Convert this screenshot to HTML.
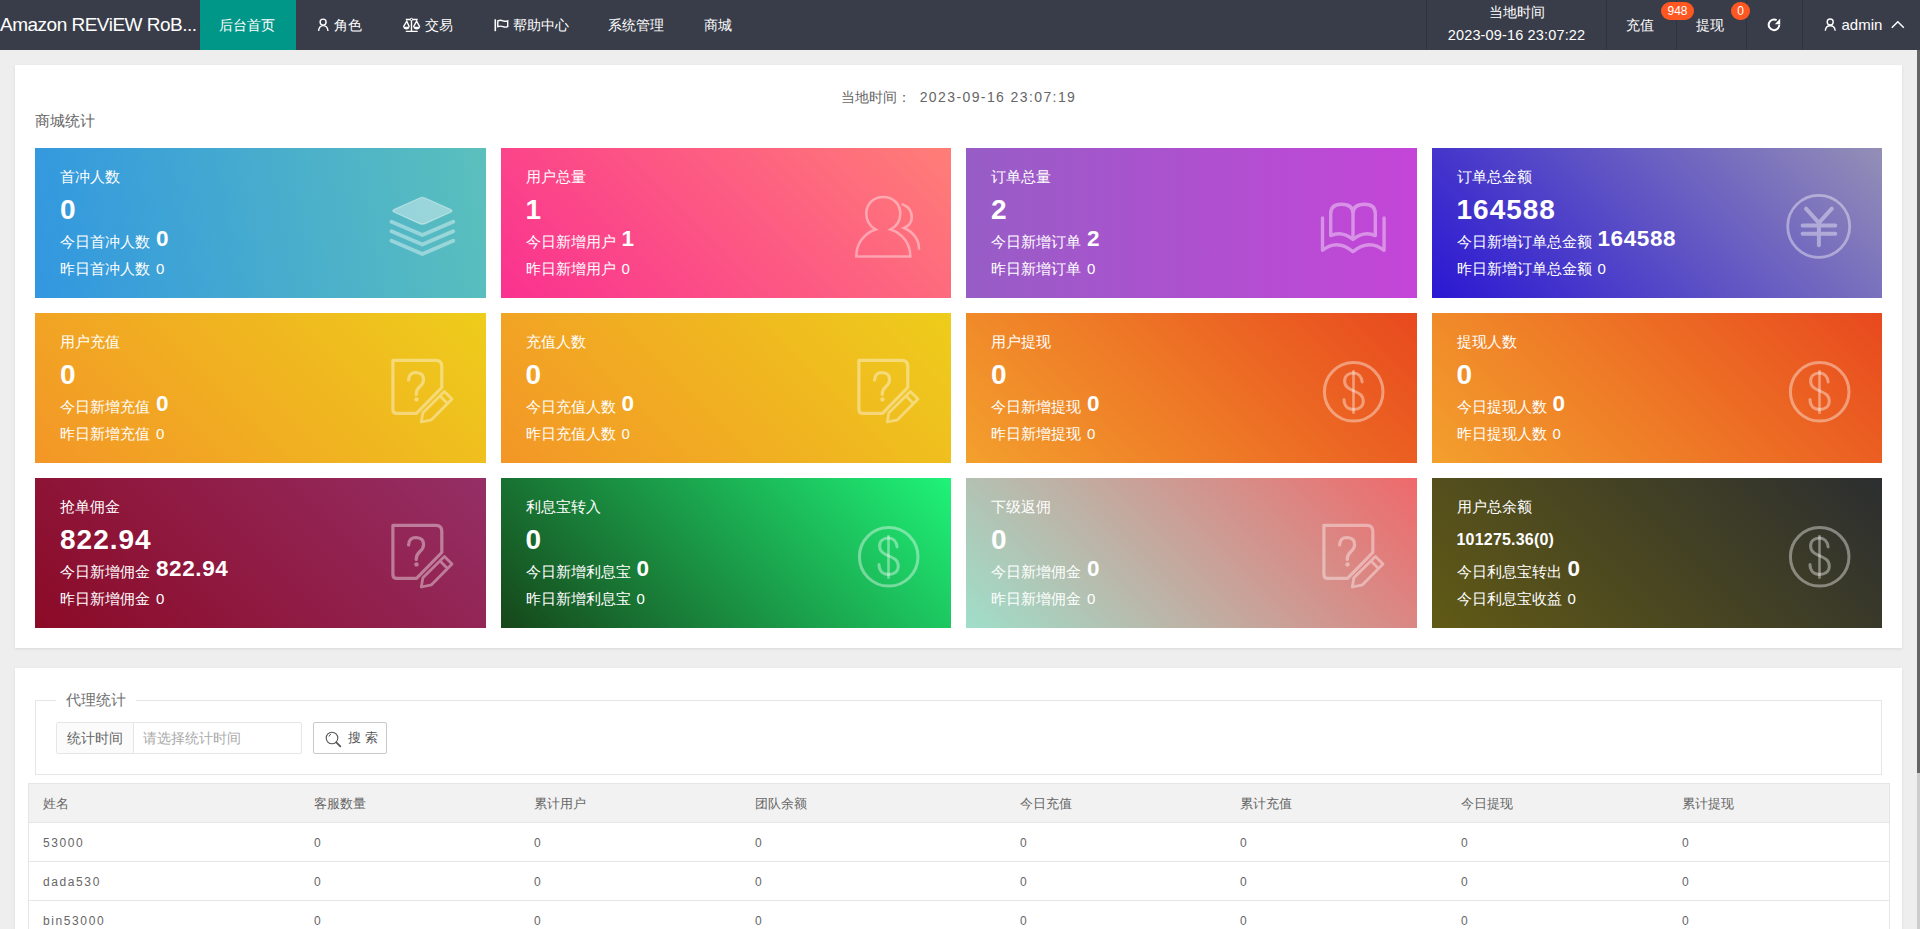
<!DOCTYPE html>
<html><head><meta charset="utf-8">
<style>
*{box-sizing:border-box;margin:0;padding:0}
html,body{width:1920px;height:929px;overflow:hidden}
body{background:#eeeeee;font-family:"Liberation Sans",sans-serif;font-size:14px;color:#333;position:relative}
.hd{position:absolute;left:0;top:0;width:1920px;height:50px;background:#393d49;color:#fff}
.hd .logo{position:absolute;left:0;top:0;width:200px;height:50px;line-height:49px;font-size:19px;letter-spacing:-0.5px;white-space:nowrap;overflow:hidden}
.hd .on{position:absolute;left:200px;top:0;width:96px;height:50px;background:#009688}
.nt{position:absolute;top:0;line-height:50px;font-size:14px;color:#fff;white-space:nowrap}
.sep{position:absolute;top:0;width:1px;height:50px;background:#30333d}
.hr{position:absolute;top:0;height:50px;color:#fff;font-size:14px;white-space:nowrap}
.badge{position:absolute;background:#ff5722;color:#fff;font-size:12px;height:18px;line-height:18px;border-radius:9px;text-align:center}
.sb{position:absolute;left:1917px;top:50px;width:3px;height:879px;background:#cdcdcd}
.sb i{position:absolute;left:0;top:0;width:3px;height:723px;background:#656565}
.panel{position:absolute;left:15px;width:1887px;background:#fff;box-shadow:0 1px 3px rgba(0,0,0,.09)}
.p1{top:65px;height:583px}
.p2{top:668px;height:300px}
.now{position:absolute;left:0;top:24px;width:1887px;text-align:center;color:#666;font-size:14px}
.now b{font-weight:normal;letter-spacing:1.4px;margin-left:9px}
.ttl{position:absolute;left:20px;top:47px;color:#666;font-size:15px}
.card{position:absolute;width:450.5px;height:150px;color:#fff;overflow:hidden}
.card .t{position:absolute;left:25px;top:19px;font-size:15px;line-height:20px;white-space:nowrap}
.card .n.sm{font-size:16px;letter-spacing:.2px}
.card .n{position:absolute;left:25px;top:46px;font-size:28px;font-weight:bold;line-height:32px;letter-spacing:1px;white-space:nowrap}
.card .d{position:absolute;left:25px;top:80px;font-size:15px;line-height:24px;white-space:nowrap}
.card .d b{font-size:22.5px;margin-left:6px;letter-spacing:.6px;position:relative;top:-1px}
.card .y{position:absolute;left:25px;top:111px;font-size:15px;line-height:20px;white-space:nowrap}
.card .y span{margin-left:6px}
.card svg.ic{position:absolute;left:340px;top:30px;width:100px;height:100px}
.fs{position:absolute;left:20px;top:32px;width:1847px;height:75px;border:1px solid #e6e6e6}
.lg{position:absolute;left:20px;top:-12px;padding:0 10px;background:#fff;color:#707070;font-size:15px;line-height:22px}
.ipt{position:absolute;left:20px;top:21px;height:32px;width:246px;border:1px solid #e6e6e6;border-radius:2px}
.ipt .l{position:absolute;left:0;top:0;width:77px;height:30px;line-height:30px;background:#fbfbfb;border-right:1px solid #e6e6e6;color:#666;text-align:center;font-size:14px}
.ipt .v{position:absolute;left:86px;top:0;line-height:30px;color:#aaa;font-size:14px}
.btn{position:absolute;left:277px;top:21px;width:74px;height:32px;border:1px solid #c9c9c9;border-radius:2px;background:#fff;color:#555;font-size:14px}
.tbl{position:absolute;left:13px;top:115px;width:1862px;border:1px solid #e6e6e6;border-collapse:collapse}
.tbl div.r{position:relative;height:39px;border-bottom:1px solid #e6e6e6;font-size:12px;color:#666}
.tbl div.r.h{background:#f2f2f2}
.tbl div.r.h span{font-size:13px;letter-spacing:0}
.tbl div.r span{position:absolute;top:1px;line-height:38px;letter-spacing:1.6px}
</style></head><body>
<div class="hd">
  <div class="logo">Amazon REViEW RoB...</div>
  <div class="on"></div>
  <span class="nt" style="left:219px">后台首页</span>
  <span class="nt" style="left:333.5px">角色</span>
  <span class="nt" style="left:424.5px">交易</span>
  <span class="nt" style="left:512.5px">帮助中心</span>
  <span class="nt" style="left:608px">系统管理</span>
  <span class="nt" style="left:704px">商城</span>
  <div class="sep" style="left:1426px"></div>
  <div class="sep" style="left:1606px"></div>
  <div class="sep" style="left:1676px"></div>
  <div class="sep" style="left:1746px"></div>
  <div class="sep" style="left:1802px"></div>
  <div class="hr" style="left:1427px;width:179px;text-align:center;top:2px;line-height:21px">当地时间</div><div class="hr" style="left:1427px;width:179px;text-align:center;top:25px;line-height:21px;font-size:14.5px;letter-spacing:.15px">2023-09-16 23:07:22</div>
  <span class="nt" style="left:1626px">充值</span>
  <div class="badge" style="left:1661px;top:2px;width:33px">948</div>
  <span class="nt" style="left:1696px">提现</span>
  <div class="badge" style="left:1731px;top:2px;width:19px">0</div>
  <span class="nt" style="left:1841.5px;font-size:15px;top:0;line-height:49px">admin</span>
  <svg style="position:absolute;left:0;top:0" width="1920" height="50" viewBox="0 0 1920 50">
    <g fill="none" stroke="#fff" stroke-width="1.4">
      <circle cx="323.1" cy="22.1" r="3"/><path d="M318.6 31 Q319 25.6 323.2 25.6 Q327.6 25.6 328 31"/>
      <circle cx="1830.2" cy="22" r="3"/><path d="M1825.3 30.8 Q1825.6 25.8 1830.2 25.8 Q1834.8 25.8 1835.2 30.8"/>
      <path d="M405.8 19.5 H417.7 M411.5 19.5 V31.3 M405.8 31.4 H417.7 M403.4 26.9 L406.8 21.2 L409.3 26.9 M413.5 26.9 L416.6 21.2 L419.8 26.9"/>
      <path d="M495.3 19.3 V31.2" stroke-width="1.6"/>
      <path d="M497.8 20.8 Q500.5 19.8 503 20.8 Q505.5 21.8 507.7 20.8 V26.6 Q505.5 27.6 503 26.6 Q500.5 25.6 497.8 26.6 Z"/>
      <path d="M1891.8 27.7 L1897.8 21.7 L1903.8 27.7" stroke-width="1.5"/>
      <path d="M1779.3 24.6 A5.3 5.3 0 1 1 1776.6 20.2" stroke-width="2"/>
    </g>
    <circle cx="411.5" cy="19.4" r="1.1" fill="#393d49" stroke="#fff" stroke-width="1"/>
    <path d="M403.3 26.8 H409.5 Q409.2 29.4 406.4 29.4 Q403.6 29.4 403.3 26.8Z M413.4 26.8 H420 Q419.7 29.4 416.7 29.4 Q413.7 29.4 413.4 26.8Z" fill="#fff"/>
    <path d="M1780.2 18.6 V24.2 H1774.8 Z" fill="#fff"/>
  </svg>
</div>
<div class="sb"><i></i></div>

<div class="panel p1">
  <div class="now">当地时间：<b>2023-09-16 23:07:19</b></div>
  <div class="ttl">商城统计</div>
  <div class="card" style="left:20px;top:83px;background:linear-gradient(80deg,#3297e0,#5bc0bc)"><div class="t">首冲人数</div><div class="n">0</div><div class="d">今日首冲人数<b>0</b></div><div class="y">昨日首冲人数<span>0</span></div><svg class="ic" viewBox="0 0 100 100"><path d="M44.2 20.2 Q47.4 18.6 50.6 20.2 L75.5 31.4 Q78.6 32.8 75.5 34.2 L50.6 45.4 Q47.4 47 44.2 45.4 L19.3 34.2 Q16.2 32.8 19.3 31.4 Z" fill="rgba(255,255,255,.4)" stroke="rgba(255,255,255,.4)" stroke-width="1.2" stroke-linejoin="round"/><path d="M16.5 43.8 L47.4 57 L78.2 43.8 M16.5 53.3 L47.4 66.5 L78.2 53.3 M16.5 62.8 L47.4 76 L78.2 62.8" fill="none" stroke="rgba(255,255,255,.4)" stroke-width="3.8" stroke-linecap="round" stroke-linejoin="round"/></svg></div>
<div class="card" style="left:485.5px;top:83px;background:linear-gradient(45deg,#fa3190,#ff7e77)"><div class="t">用户总量</div><div class="n">1</div><div class="d">今日新增用户<b>1</b></div><div class="y">昨日新增用户<span>0</span></div><svg class="ic" viewBox="0 0 100 100"><path d="M34.6 51.4 C28.5 48 25.3 42 25.3 35.5 C25.3 25.5 33 19 42.3 19 C51.6 19 59.3 25.5 59.3 35.5 C59.3 42 56.1 48 49.6 51.4 C61.5 55 69.3 66 69.3 78.5 L15.3 78.5 C15.3 66 23 55 34.6 51.4 Z M61.7 26.4 C67 28.5 70.8 33 70.8 39.5 C70.8 44 67.5 48 63 50 C72.5 54 78 62 78 70.7" fill="none" stroke="rgba(255,255,255,.4)" stroke-width="2.6" stroke-linecap="round"/></svg></div>
<div class="card" style="left:951px;top:83px;background:linear-gradient(90deg,#975dc6,#c445d8)"><div class="t">订单总量</div><div class="n">2</div><div class="d">今日新增订单<b>2</b></div><div class="y">昨日新增订单<span>0</span></div><svg class="ic" viewBox="0 0 100 100"><path d="M16.5 40 L16.5 72.3 Q31 60.5 47 73.6 Q63 60.5 78.1 72.3 L78.1 40 M24.7 57.6 L24.7 35.5 Q24.7 26.2 35.5 26.2 Q47 26.2 47 35.5 L47 61.5 Q36 52.5 24.7 57.6 Z M47 61.5 Q58 52.5 69.3 57.6 L69.3 35.5 Q69.3 26.2 58.5 26.2 Q47 26.2 47 35.5" fill="none" stroke="rgba(255,255,255,.4)" stroke-width="3.4" stroke-linecap="round" stroke-linejoin="round"/></svg></div>
<div class="card" style="left:1416.5px;top:83px;background:linear-gradient(45deg,#2a17d3,#948fb6)"><div class="t">订单总金额</div><div class="n">164588</div><div class="d">今日新增订单总金额<b>164588</b></div><div class="y">昨日新增订单总金额<span>0</span></div><svg class="ic" viewBox="0 0 100 100"><circle cx="46.7" cy="48.3" r="31" fill="none" stroke="rgba(255,255,255,.4)" stroke-width="2.8"/><path d="M34 30.7 L46.9 44.9 L59.8 30.7 M30.6 47.5 H63.3 M30.6 55.7 H63.3 M46.9 44.9 V67.3" fill="none" stroke="rgba(255,255,255,.4)" stroke-width="4" stroke-linecap="round" stroke-linejoin="round"/></svg></div>
<div class="card" style="left:20px;top:248px;background:linear-gradient(45deg,#f39627,#eecd1b)"><div class="t">用户充值</div><div class="n">0</div><div class="d">今日新增充值<b>0</b></div><div class="y">昨日新增充值<span>0</span></div><svg class="ic" viewBox="0 0 100 100"><path d="M66.8 44.5 L66.8 23.3 Q66.8 17.3 60.8 17.3 L17.9 17.3 L17.9 66.4 Q17.9 70.4 21.9 70.4 L41.5 70.4 Z" fill="none" stroke="rgba(255,255,255,.4)" stroke-width="3.2" stroke-linejoin="round"/><path d="M33.6 37 Q34 29.5 41 29.5 Q48.6 29.8 48.6 36.5 Q48.6 40.5 44.5 44 Q41.2 47 41.2 51.5" fill="none" stroke="rgba(255,255,255,.4)" stroke-width="3.2" stroke-linecap="round"/><circle cx="41.5" cy="56.4" r="2.2" fill="rgba(255,255,255,.4)"/><path d="M69.4 48.6 L77 56.1 L56.5 76.8 L46.3 79 L47.9 69.8 Z M65.1 53.1 L72.7 60.7" fill="none" stroke="rgba(255,255,255,.4)" stroke-width="2.8" stroke-linejoin="round"/></svg></div>
<div class="card" style="left:485.5px;top:248px;background:linear-gradient(45deg,#f39627,#eecd1b)"><div class="t">充值人数</div><div class="n">0</div><div class="d">今日充值人数<b>0</b></div><div class="y">昨日充值人数<span>0</span></div><svg class="ic" viewBox="0 0 100 100"><path d="M66.8 44.5 L66.8 23.3 Q66.8 17.3 60.8 17.3 L17.9 17.3 L17.9 66.4 Q17.9 70.4 21.9 70.4 L41.5 70.4 Z" fill="none" stroke="rgba(255,255,255,.4)" stroke-width="3.2" stroke-linejoin="round"/><path d="M33.6 37 Q34 29.5 41 29.5 Q48.6 29.8 48.6 36.5 Q48.6 40.5 44.5 44 Q41.2 47 41.2 51.5" fill="none" stroke="rgba(255,255,255,.4)" stroke-width="3.2" stroke-linecap="round"/><circle cx="41.5" cy="56.4" r="2.2" fill="rgba(255,255,255,.4)"/><path d="M69.4 48.6 L77 56.1 L56.5 76.8 L46.3 79 L47.9 69.8 Z M65.1 53.1 L72.7 60.7" fill="none" stroke="rgba(255,255,255,.4)" stroke-width="2.8" stroke-linejoin="round"/></svg></div>
<div class="card" style="left:951px;top:248px;background:linear-gradient(45deg,#f3a02d,#e8491e)"><div class="t">用户提现</div><div class="n">0</div><div class="d">今日新增提现<b>0</b></div><div class="y">昨日新增提现<span>0</span></div><svg class="ic" viewBox="0 0 100 100"><circle cx="47.7" cy="48.8" r="29.3" fill="none" stroke="rgba(255,255,255,.4)" stroke-width="3"/><path d="M47.5 27.2 V70.7" stroke="rgba(255,255,255,.4)" stroke-width="2.6"/><path d="M56.1 38.9 C55.5 33 52 29.9 47.5 29.9 C42.3 29.9 38.6 33 38.6 38 C38.6 44 43.5 46 48 48 C53 50.2 57.3 52.3 57.3 58.3 C57.3 63.5 53.2 66.4 47.5 66.4 C42 66.4 38 63 38 56.5" fill="none" stroke="rgba(255,255,255,.4)" stroke-width="3" stroke-linecap="round"/></svg></div>
<div class="card" style="left:1416.5px;top:248px;background:linear-gradient(45deg,#f3a02d,#e8491e)"><div class="t">提现人数</div><div class="n">0</div><div class="d">今日提现人数<b>0</b></div><div class="y">昨日提现人数<span>0</span></div><svg class="ic" viewBox="0 0 100 100"><circle cx="47.7" cy="48.8" r="29.3" fill="none" stroke="rgba(255,255,255,.4)" stroke-width="3"/><path d="M47.5 27.2 V70.7" stroke="rgba(255,255,255,.4)" stroke-width="2.6"/><path d="M56.1 38.9 C55.5 33 52 29.9 47.5 29.9 C42.3 29.9 38.6 33 38.6 38 C38.6 44 43.5 46 48 48 C53 50.2 57.3 52.3 57.3 58.3 C57.3 63.5 53.2 66.4 47.5 66.4 C42 66.4 38 63 38 56.5" fill="none" stroke="rgba(255,255,255,.4)" stroke-width="3" stroke-linecap="round"/></svg></div>
<div class="card" style="left:20px;top:413px;background:linear-gradient(45deg,#8b0a26,#952f66)"><div class="t">抢单佣金</div><div class="n">822.94</div><div class="d">今日新增佣金<b>822.94</b></div><div class="y">昨日新增佣金<span>0</span></div><svg class="ic" viewBox="0 0 100 100"><path d="M66.8 44.5 L66.8 23.3 Q66.8 17.3 60.8 17.3 L17.9 17.3 L17.9 66.4 Q17.9 70.4 21.9 70.4 L41.5 70.4 Z" fill="none" stroke="rgba(255,255,255,.4)" stroke-width="3.2" stroke-linejoin="round"/><path d="M33.6 37 Q34 29.5 41 29.5 Q48.6 29.8 48.6 36.5 Q48.6 40.5 44.5 44 Q41.2 47 41.2 51.5" fill="none" stroke="rgba(255,255,255,.4)" stroke-width="3.2" stroke-linecap="round"/><circle cx="41.5" cy="56.4" r="2.2" fill="rgba(255,255,255,.4)"/><path d="M69.4 48.6 L77 56.1 L56.5 76.8 L46.3 79 L47.9 69.8 Z M65.1 53.1 L72.7 60.7" fill="none" stroke="rgba(255,255,255,.4)" stroke-width="2.8" stroke-linejoin="round"/></svg></div>
<div class="card" style="left:485.5px;top:413px;background:linear-gradient(45deg,#16461a,#1ff378)"><div class="t">利息宝转入</div><div class="n">0</div><div class="d">今日新增利息宝<b>0</b></div><div class="y">昨日新增利息宝<span>0</span></div><svg class="ic" viewBox="0 0 100 100"><circle cx="47.7" cy="48.8" r="29.3" fill="none" stroke="rgba(255,255,255,.4)" stroke-width="3"/><path d="M47.5 27.2 V70.7" stroke="rgba(255,255,255,.4)" stroke-width="2.6"/><path d="M56.1 38.9 C55.5 33 52 29.9 47.5 29.9 C42.3 29.9 38.6 33 38.6 38 C38.6 44 43.5 46 48 48 C53 50.2 57.3 52.3 57.3 58.3 C57.3 63.5 53.2 66.4 47.5 66.4 C42 66.4 38 63 38 56.5" fill="none" stroke="rgba(255,255,255,.4)" stroke-width="3" stroke-linecap="round"/></svg></div>
<div class="card" style="left:951px;top:413px;background:linear-gradient(45deg,#9fdfca,#ef696b)"><div class="t">下级返佣</div><div class="n">0</div><div class="d">今日新增佣金<b>0</b></div><div class="y">昨日新增佣金<span>0</span></div><svg class="ic" viewBox="0 0 100 100"><path d="M66.8 44.5 L66.8 23.3 Q66.8 17.3 60.8 17.3 L17.9 17.3 L17.9 66.4 Q17.9 70.4 21.9 70.4 L41.5 70.4 Z" fill="none" stroke="rgba(255,255,255,.4)" stroke-width="3.2" stroke-linejoin="round"/><path d="M33.6 37 Q34 29.5 41 29.5 Q48.6 29.8 48.6 36.5 Q48.6 40.5 44.5 44 Q41.2 47 41.2 51.5" fill="none" stroke="rgba(255,255,255,.4)" stroke-width="3.2" stroke-linecap="round"/><circle cx="41.5" cy="56.4" r="2.2" fill="rgba(255,255,255,.4)"/><path d="M69.4 48.6 L77 56.1 L56.5 76.8 L46.3 79 L47.9 69.8 Z M65.1 53.1 L72.7 60.7" fill="none" stroke="rgba(255,255,255,.4)" stroke-width="2.8" stroke-linejoin="round"/></svg></div>
<div class="card" style="left:1416.5px;top:413px;background:linear-gradient(45deg,#615a15,#2c2e30)"><div class="t">用户总余额</div><div class="n sm">101275.36(0)</div><div class="d">今日利息宝转出<b>0</b></div><div class="y">今日利息宝收益<span>0</span></div><svg class="ic" viewBox="0 0 100 100"><circle cx="47.7" cy="48.8" r="29.3" fill="none" stroke="rgba(255,255,255,.4)" stroke-width="3"/><path d="M47.5 27.2 V70.7" stroke="rgba(255,255,255,.4)" stroke-width="2.6"/><path d="M56.1 38.9 C55.5 33 52 29.9 47.5 29.9 C42.3 29.9 38.6 33 38.6 38 C38.6 44 43.5 46 48 48 C53 50.2 57.3 52.3 57.3 58.3 C57.3 63.5 53.2 66.4 47.5 66.4 C42 66.4 38 63 38 56.5" fill="none" stroke="rgba(255,255,255,.4)" stroke-width="3" stroke-linecap="round"/></svg></div>
</div>

<div class="panel p2">
  <div class="fs"><div class="lg">代理统计</div>
<div class="ipt"><div class="l">统计时间</div><div class="v">请选择统计时间</div></div>
<div class="btn"><svg style="position:absolute;left:11px;top:8px" width="17" height="17" viewBox="0 0 17 17"><circle cx="7" cy="7" r="5.8" fill="none" stroke="#555" stroke-width="1.1"/><path d="M11.3 11.3l4 4" stroke="#555" stroke-width="1.8" stroke-linecap="round"/><path d="M4 5.5a3.5 3.5 0 0 1 2-2.3" fill="none" stroke="#555" stroke-width="1"/></svg><span style="position:absolute;left:34px;top:0;line-height:30px;letter-spacing:4px;font-size:13px">搜索</span></div>
</div><div class="tbl">
<div class="r h"><span style="left:14px">姓名</span><span style="left:285px">客服数量</span><span style="left:505px">累计用户</span><span style="left:726px">团队余额</span><span style="left:991px">今日充值</span><span style="left:1211px">累计充值</span><span style="left:1432px">今日提现</span><span style="left:1653px">累计提现</span></div>
<div class="r"><span style="left:14px">53000</span><span style="left:285px">0</span><span style="left:505px">0</span><span style="left:726px">0</span><span style="left:991px">0</span><span style="left:1211px">0</span><span style="left:1432px">0</span><span style="left:1653px">0</span></div>
<div class="r"><span style="left:14px">dada530</span><span style="left:285px">0</span><span style="left:505px">0</span><span style="left:726px">0</span><span style="left:991px">0</span><span style="left:1211px">0</span><span style="left:1432px">0</span><span style="left:1653px">0</span></div>
<div class="r"><span style="left:14px">bin53000</span><span style="left:285px">0</span><span style="left:505px">0</span><span style="left:726px">0</span><span style="left:991px">0</span><span style="left:1211px">0</span><span style="left:1432px">0</span><span style="left:1653px">0</span></div>
<div class="r"><span style="left:14px"></span><span style="left:285px"></span><span style="left:505px"></span><span style="left:726px"></span><span style="left:991px"></span><span style="left:1211px"></span><span style="left:1432px"></span><span style="left:1653px"></span></div>
</div>
</div>
</body></html>
